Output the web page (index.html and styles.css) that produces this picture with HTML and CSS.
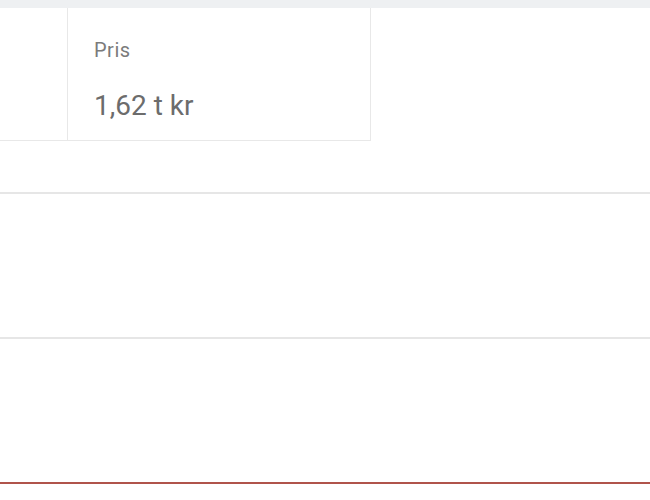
FILE: index.html
```html
<!DOCTYPE html>
<html lang="sv">
<head>
<meta charset="utf-8">
<title>Pris</title>
<link rel="stylesheet" href="styles.css">
</head>
<body>
  <div class="topbar"></div>
  <div class="cards">
    <div class="card card-left"></div>
    <div class="card card-price">
      <div class="label">Pris</div>
      <div class="value">1,62 t kr</div>
    </div>
  </div>
  <div class="section"></div>
  <div class="section"></div>
  <div class="section section-accent"></div>
</body>
</html>
```

FILE: styles.css
```css
html, body {
  margin: 0;
  padding: 0;
  background: #ffffff;
  font-family: Roboto, "Liberation Sans", Arial, sans-serif;
  width: 650px;
  height: 500px;
  overflow: hidden;
}

.topbar {
  height: 8px;
  background: #eef0f2;
}

.cards {
  display: flex;
  height: 133px;
}

.card {
  box-sizing: border-box;
  border-right: 1px solid #e8e8e8;
  border-bottom: 1px solid #e8e8e8;
  background: #ffffff;
}

.card-left {
  width: 68px;
}

.card-price {
  width: 303px;
  padding: 30px 0 18px 26px;
}

.label {
  font-size: 20px;
  line-height: 24px;
  letter-spacing: 0.5px;
  color: #7b7b7b;
}

.value {
  margin-top: 28px;
  font-size: 28px;
  line-height: 32px;
  color: #6c6c6c;
}

.cards + .section {
  margin-top: 51px;
}

.section {
  height: 143px;
  border-top: 2px solid #e6e6e6;
}

.section-accent {
  height: 14px;
  border-top: 2px solid #b0544b;
}
```
